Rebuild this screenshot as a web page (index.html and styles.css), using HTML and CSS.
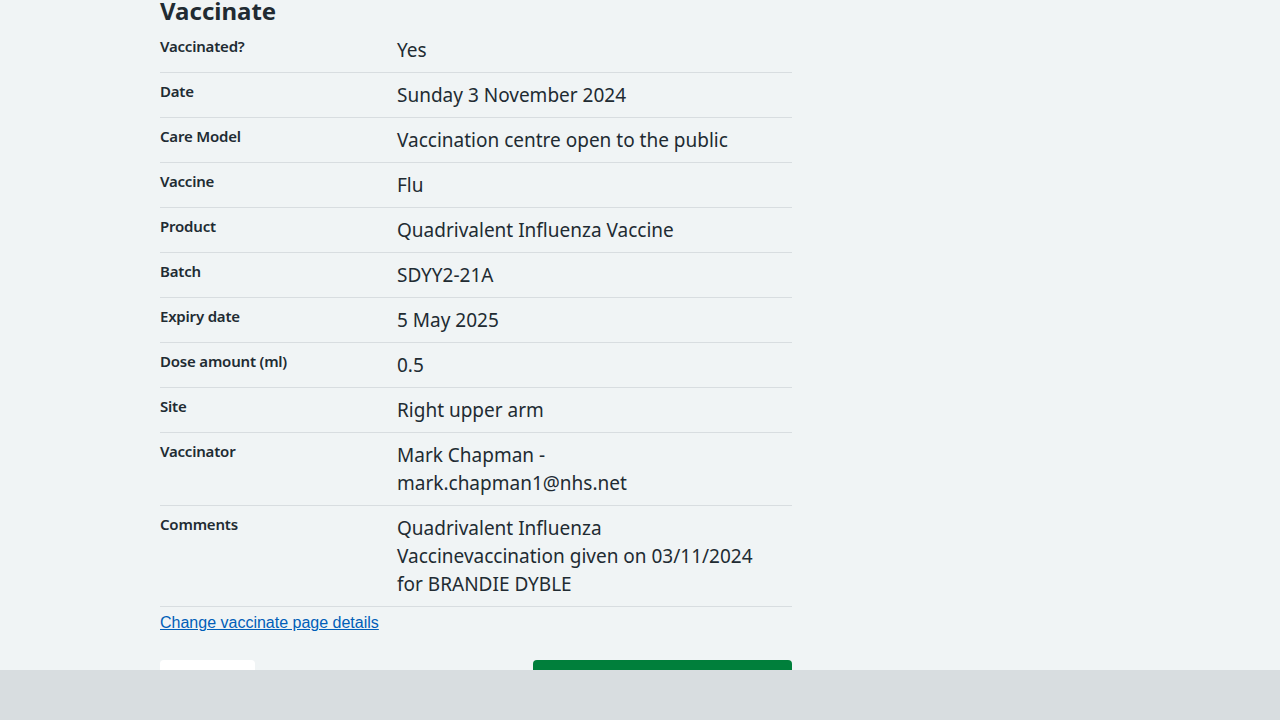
FILE: index.html
```html
<!DOCTYPE html>
<html lang="en">
<head>
<meta charset="utf-8">
<title>Vaccinate</title>
<link rel="stylesheet" href="styles.css">
</head>
<body>
<main class="page">
  <h2 class="heading">Vaccinate</h2>
  <dl class="summary">
    <div class="row"><dt class="key">Vaccinated?</dt><dd class="value">Yes</dd></div>
    <div class="row"><dt class="key">Date</dt><dd class="value">Sunday 3 November 2024</dd></div>
    <div class="row"><dt class="key">Care Model</dt><dd class="value">Vaccination centre open to the public</dd></div>
    <div class="row"><dt class="key">Vaccine</dt><dd class="value">Flu</dd></div>
    <div class="row"><dt class="key">Product</dt><dd class="value">Quadrivalent Influenza Vaccine</dd></div>
    <div class="row"><dt class="key">Batch</dt><dd class="value">SDYY2-21A</dd></div>
    <div class="row"><dt class="key">Expiry date</dt><dd class="value">5 May 2025</dd></div>
    <div class="row"><dt class="key">Dose amount (ml)</dt><dd class="value">0.5</dd></div>
    <div class="row"><dt class="key">Site</dt><dd class="value">Right upper arm</dd></div>
    <div class="row"><dt class="key">Vaccinator</dt><dd class="value">Mark Chapman - mark.chapman1@nhs.net</dd></div>
    <div class="row"><dt class="key">Comments</dt><dd class="value">Quadrivalent Influenza Vaccinevaccination given on 03/11/2024 for BRANDIE DYBLE</dd></div>
  </dl>
  <a class="change-link" href="#">Change vaccinate page details</a>
  <div class="actions">
    <button class="btn btn-secondary" type="button">Back</button>
    <button class="btn btn-primary" type="button">Confirm and save</button>
  </div>
</main>
<footer class="footer-bar"></footer>
</body>
</html>
```
FILE: styles.css
```css
html, body {
  margin: 0;
  padding: 0;
}
body {
  background: #f0f4f5;
  color: #212b32;
  font-family: "Noto Sans", "Open Sans", sans-serif;
  height: 720px;
  overflow: hidden;
}
.page {
  width: 632px;
  margin: 0 0 0 160px;
}
.heading {
  margin: 0 0 6px;
  font-size: 24px;
  line-height: 22px;
  font-weight: 700;
}
.summary {
  margin: 0;
}
.row {
  display: grid;
  grid-template-columns: 237px 1fr;
  border-bottom: 1px solid #d8dde0;
  padding: 8px 0;
}
.key {
  font-size: 15px;
  font-weight: 600;
  line-height: 20px;
  letter-spacing: -0.2px;
  padding-right: 24px;
}
.value {
  margin: 0;
  font-size: 19px;
  line-height: 28px;
  padding-right: 24px;
}
.change-link {
  display: block;
  font-family: "Liberation Sans", Arial, sans-serif;
  font-size: 16px;
  line-height: 32px;
  color: #005eb8;
  text-decoration: underline;
}
.actions {
  display: flex;
  justify-content: space-between;
  margin-top: 21px;
}
.btn {
  border: 0;
  border-radius: 4px;
  height: 48px;
  font-family: inherit;
  font-size: 19px;
  font-weight: 600;
}
.btn-secondary {
  width: 95px;
  background: #ffffff;
  color: #005eb8;
}
.btn-primary {
  width: 259px;
  background: #007f3b;
  color: #ffffff;
}
.footer-bar {
  position: fixed;
  left: 0;
  right: 0;
  bottom: 0;
  height: 50px;
  background: #d8dde0;
}
```
